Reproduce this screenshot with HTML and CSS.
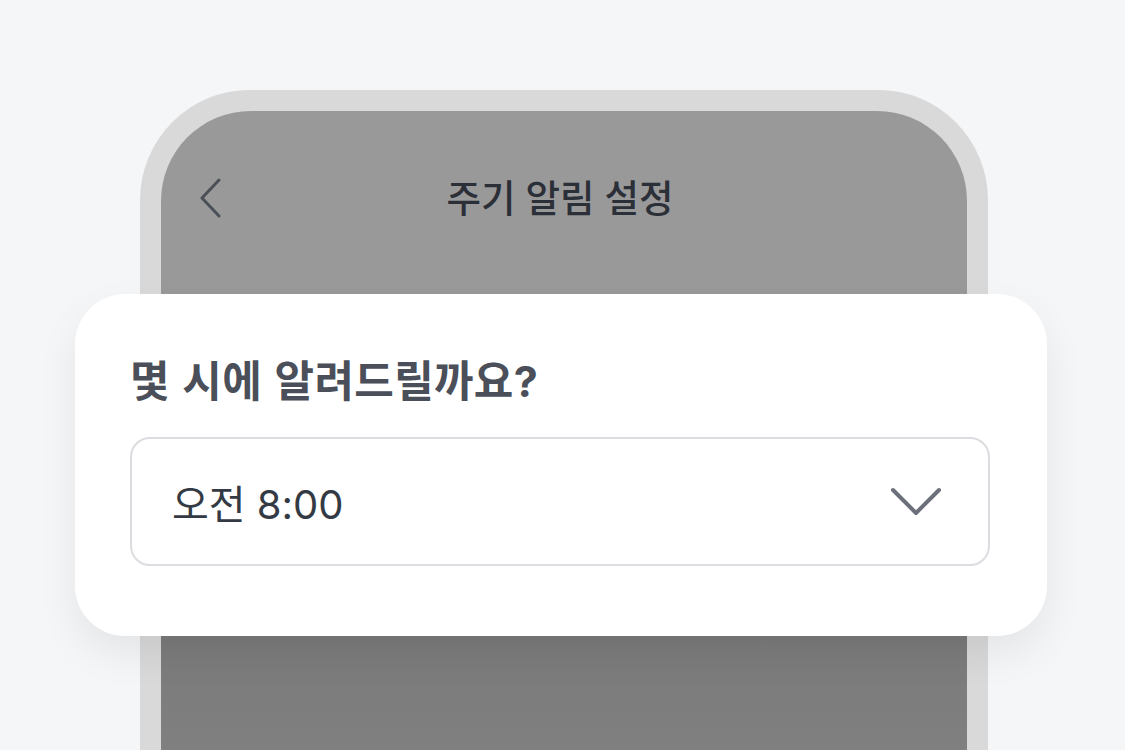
FILE: index.html
```html
<!DOCTYPE html>
<html lang="ko">
<head>
<meta charset="utf-8">
<link rel="stylesheet" href="styles.css">
</head>
<body>
<div class="stage">
  <div class="phone">
    <div class="screen">
      <div class="header">
        <svg class="back" width="22" height="40" viewBox="0 0 22 40"><path d="M20 2 L3 20 L20 38" fill="none" stroke="#4a4f58" stroke-width="3" stroke-linecap="round" stroke-linejoin="round"/></svg>
        <div class="title">주기 알림 설정</div>
        <div></div>
      </div>
    </div>
  </div>
  <div class="card">
    <div class="question">몇 시에 알려드릴까요?</div>
    <div class="select">
      <span class="value">오전 8:00</span>
      <svg class="chev" width="52" height="30" viewBox="0 0 52 30"><path d="M3 3 L26 26 L49 3" fill="none" stroke="#6b707a" stroke-width="4" stroke-linecap="round" stroke-linejoin="round"/></svg>
    </div>
  </div>
</div>
</body>
</html>
```
FILE: styles.css
```css
* { box-sizing: border-box; }
html, body { margin: 0; height: 100%; overflow: hidden; }
body {
  background: #f5f6f8;
  font-family: Inter, "Noto Sans CJK KR", "Noto Sans", sans-serif;
}
.stage {
  position: relative;
  width: 1125px;
  height: 750px;
  overflow: hidden;
  padding: 90px 0 0 140px;
}
.phone {
  width: 848px;
  height: 660px;
  background: #d9d9d9;
  border-radius: 110px 110px 0 0;
  padding: 21px 21px 0 21px;
}
.screen {
  height: 100%;
  border-radius: 90px 90px 0 0;
  background: linear-gradient(#999999 0, #999999 300px, #7a7a7a 525px, #808080 640px);
}
.header {
  height: 172px;
  display: grid;
  grid-template-columns: 1fr auto 1fr;
  align-items: center;
  padding: 0 38px;
}
.back { display: block; transform: translateY(1px); }
.title {
  font-size: 37.5px;
  font-weight: 500;
  color: #2b2f37;
  transform: translate(-4px, -2px);
}
.card {
  position: absolute;
  left: 75px;
  top: 294px;
  width: 972px;
  height: 342px;
  background: #ffffff;
  border-radius: 50px;
  box-shadow: 0 18px 40px rgba(0, 0, 0, 0.07);
  padding: 55px 57px 0 55px;
}
.question {
  font-size: 43px;
  font-weight: 700;
  color: #4a4f59;
  line-height: 64px;
  letter-spacing: 0.3px;
  word-spacing: 2px;
}
.select {
  margin-top: 24px;
  height: 129px;
  border: 2px solid #dcdde1;
  border-radius: 20px;
  display: flex;
  align-items: center;
  justify-content: space-between;
  padding: 0 46px 0 40px;
}
.value {
  font-size: 40px;
  font-weight: 400;
  color: #333a44;
}
.chev { display: block; }
```
